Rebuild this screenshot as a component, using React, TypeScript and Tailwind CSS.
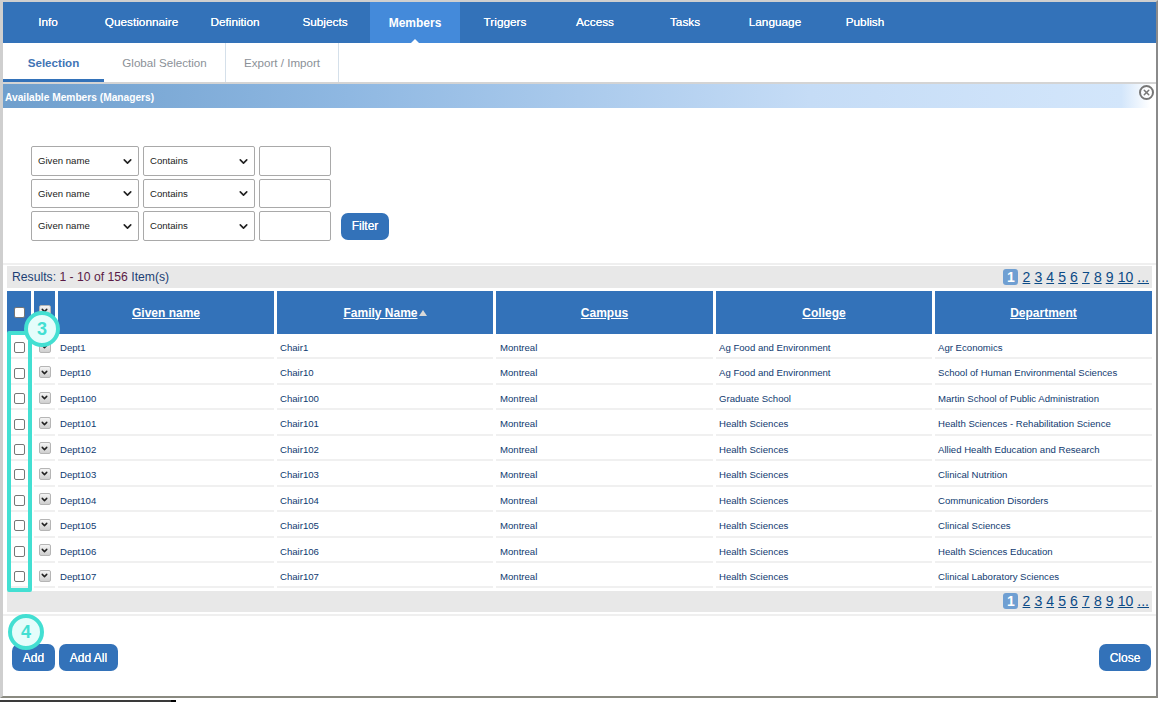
import { ChevronDown, X } from "lucide-react";

const tabs = [
  { label: "Info", w: "w-[90px]" },
  { label: "Questionnaire", w: "w-[97px]" },
  { label: "Definition", w: "w-[90px]" },
  { label: "Subjects", w: "w-[90px]" },
  { label: "Members", w: "w-[90px]", active: true },
  { label: "Triggers", w: "w-[90px]" },
  { label: "Access", w: "w-[90px]" },
  { label: "Tasks", w: "w-[90px]" },
  { label: "Language", w: "w-[90px]" },
  { label: "Publish", w: "w-[90px]" },
];

const rows = [
  ["Dept1", "Chair1", "Ag Food and Environment", "Agr Economics"],
  ["Dept10", "Chair10", "Ag Food and Environment", "School of Human Environmental Sciences"],
  ["Dept100", "Chair100", "Graduate School", "Martin School of Public Administration"],
  ["Dept101", "Chair101", "Health Sciences", "Health Sciences - Rehabilitation Science"],
  ["Dept102", "Chair102", "Health Sciences", "Allied Health Education and Research"],
  ["Dept103", "Chair103", "Health Sciences", "Clinical Nutrition"],
  ["Dept104", "Chair104", "Health Sciences", "Communication Disorders"],
  ["Dept105", "Chair105", "Health Sciences", "Clinical Sciences"],
  ["Dept106", "Chair106", "Health Sciences", "Health Sciences Education"],
  ["Dept107", "Chair107", "Health Sciences", "Clinical Laboratory Sciences"],
];

const gridCols =
  "grid grid-cols-[24px_21px_216px_216px_217px_216px_217px] gap-x-[3px]";

function Pager() {
  return (
    <div className="flex items-center gap-[4.1px] text-[14px] leading-[16px] text-[#0b4a86]">
      <span className="flex h-[16px] w-[15px] items-center justify-center rounded-[3px] bg-[#6f9fd2] font-bold text-white">
        1
      </span>
      {["2", "3", "4", "5", "6", "7", "8", "9", "10", "..."].map((n) => (
        <span key={n} className="underline">
          {n}
        </span>
      ))}
    </div>
  );
}

function BlueButton({ label, className }: { label: string; className: string }) {
  return (
    <button
      className={`flex items-center justify-center rounded-[7px] bg-[#3372b9] text-[12px] text-white [text-shadow:0_0_0.6px_#fff] ${className}`}
    >
      {label}
    </button>
  );
}

function Dropdown({ label, className }: { label: string; className: string }) {
  return (
    <div
      className={`flex items-center justify-between rounded-[2px] border border-[#a9a9a9] bg-white pl-[6px] pr-[4px] text-[9.6px] text-[#222] ${className}`}
    >
      <span className="pt-[1px]">{label}</span>
      <ChevronDown size={13} strokeWidth={3} className="text-[#222]" />
    </div>
  );
}

function FilterRow({ h, children }: { h: string; children?: React.ReactNode }) {
  return (
    <div className={`flex items-center gap-[4px] ${h}`}>
      <Dropdown label="Given name" className="h-full w-[108px]" />
      <Dropdown label="Contains" className="h-full w-[112px]" />
      <div className="h-full w-[72px] rounded-[2px] border border-[#a9a9a9] bg-white" />
      {children}
    </div>
  );
}

function RowToggle() {
  return (
    <span className="flex h-[12px] w-[12px] items-center justify-center rounded-[2px] border border-[#b5b5b5] bg-gradient-to-b from-[#f4f4f4] to-[#cfcfcf]">
      <ChevronDown size={9} strokeWidth={4} className="text-[#222]" />
    </span>
  );
}

function CheckBox() {
  return (
    <span className="block h-[11px] w-[11px] rounded-[2px] border border-[#767676] bg-white" />
  );
}

function App() {
  return (
    <div className="relative h-[702px] w-[1160px] overflow-hidden bg-white font-['Liberation_Sans',Arial,sans-serif]">
      <div className="flex h-[698px] w-[1158px] flex-col border-b-2 border-l-[3px] border-r-2 border-t-2 border-b-[#8a8a80] border-l-[#cfcfcf] border-r-[#8a8a8a] border-t-[#cfcfcf]">
        <nav className="flex h-[41px] shrink-0 bg-[#3372b9]">
          {tabs.map((t) => (
            <div
              key={t.label}
              className={`relative flex items-center justify-center pt-[1px] text-white ${t.w} ${
                t.active
                  ? "bg-[#448ada] text-[12px] font-bold"
                  : "text-[11.8px] [text-shadow:0_0_0.6px_#fff]"
              }`}
            >
              {t.label}
              {t.active && (
                <span className="absolute bottom-0 left-1/2 h-0 w-0 -translate-x-1/2 border-x-[4px] border-b-[4px] border-x-transparent border-b-white" />
              )}
            </div>
          ))}
        </nav>

        <div className="flex h-[39px] shrink-0 text-[11.6px]">
          <div className="flex w-[101px] items-center justify-center border-b-[3px] border-[#3372b9] pt-[3px] font-bold text-[#3f74b5]">
            Selection
          </div>
          <div className="flex w-[122px] items-center justify-center border-r border-[#d5e0ea] text-[#8b9198]">
            Global Selection
          </div>
          <div className="flex w-[113px] items-center justify-center border-r border-[#d5e0ea] text-[#8b9198]">
            Export / Import
          </div>
        </div>

        <div className="h-[2px] shrink-0 bg-[#d4d4d4]" />

        <div className="relative h-[24px] shrink-0 bg-[linear-gradient(90deg,#6f9fcd_0%,#8fb8e2_30%,#c5dcf6_70%,#d3e6fb_97%,#ffffff_99.5%)] pl-[2px] pt-[2px] text-[10.2px] font-bold leading-[24px] text-white">
          Available Members (Managers)
        </div>

        <div className="flex shrink-0 flex-col pl-[28px] pt-[38px]">
          <div className="flex flex-col gap-[3px]">
            <FilterRow h="h-[30px]" />
            <FilterRow h="h-[29px]" />
            <FilterRow h="h-[30px]">
              <BlueButton label="Filter" className="ml-[6px] h-[27px] w-[48px]" />
            </FilterRow>
          </div>
        </div>

        <div className="mt-[22px] h-[2px] shrink-0 bg-[#efefef]" />

        <div className="mx-[4px] mt-[1px] flex h-[22px] shrink-0 items-center justify-between bg-[#e8e8e8] pl-[5px] pr-[3px]">
          <span className="text-[12.2px] text-[#1c3f74]">
            Results: <span className="text-[#5a1a45]">1 - 10 of 156</span> Item(s)
          </span>
          <Pager />
        </div>

        <div className={`${gridCols} mx-[4px] mt-[3px] shrink-0`}>
          <div className="flex h-[43px] items-center justify-center bg-[#3372b9]">
            <CheckBox />
          </div>
          <div className="flex h-[43px] items-center justify-center bg-[#3372b9] pb-[4px]">
            <RowToggle />
          </div>
          {["Given name", "Family Name", "Campus", "College", "Department"].map((h) => (
            <div
              key={h}
              className="flex h-[43px] items-center justify-center bg-[#3372b9] text-[12px] font-bold text-white"
            >
              <span className="underline">{h}</span>
              {h === "Family Name" && (
                <span className="ml-[1px] h-0 w-0 border-x-[4px] border-b-[6px] border-x-transparent border-b-[#d8d8d8]" />
              )}
            </div>
          ))}
        </div>

        <div className="mx-[4px] shrink-0">
          {rows.map((r) => (
            <div key={r[0]} className={`${gridCols} h-[25.45px] text-[9.6px] text-[#0f3a70]`}>
              <div className="flex items-center justify-center border-b-2 border-[#f0f0f0] pt-[4px]">
                <CheckBox />
              </div>
              <div className="flex items-center justify-center border-b-2 border-[#f0f0f0] pt-[2px]">
                <RowToggle />
              </div>
              <div className="flex items-center border-b-2 border-[#f0f0f0] pl-[2px] pt-[5px]">{r[0]}</div>
              <div className="flex items-center border-b-2 border-[#f0f0f0] pl-[3px] pt-[5px]">{r[1]}</div>
              <div className="flex items-center border-b-2 border-[#f0f0f0] pl-[4px] pt-[5px]">Montreal</div>
              <div className="flex items-center border-b-2 border-[#f0f0f0] pl-[3px] pt-[5px]">{r[2]}</div>
              <div className="flex items-center border-b-2 border-[#f0f0f0] pl-[3px] pt-[5px]">{r[3]}</div>
            </div>
          ))}
        </div>

        <div className="mx-[4px] mt-[2.5px] flex h-[21px] shrink-0 items-center justify-end bg-[#e8e8e8] pr-[3px]">
          <Pager />
        </div>
        <div className="mt-[2px] h-[2px] shrink-0 bg-[#efefef]" />

        <div className="mt-[28.5px] flex shrink-0 items-center pl-[9px] pr-[5px]">
          <BlueButton label="Add" className="h-[27px] w-[43px]" />
          <BlueButton label="Add All" className="ml-[4px] h-[27px] w-[59px]" />
          <BlueButton label="Close" className="ml-auto h-[27px] w-[52px]" />
        </div>
      </div>

      <div className="absolute bottom-0 left-0 h-[2px] w-[176px] bg-[linear-gradient(90deg,#3a3a3a_97%,#000000_97%)]" />

      {/* close icon on the panel header */}
      <span className="absolute left-[1139px] top-[85px] flex h-[15px] w-[15px] items-center justify-center rounded-full border-2 border-[#777] bg-white/60">
        <X size={9} strokeWidth={4} className="text-[#777]" />
      </span>

      {/* tutorial annotations */}
      <div className="absolute left-[7px] top-[331px] h-[261px] w-[25px] rounded-[2px] border-[4px] border-[#43dfd2]" />
      <div className="absolute left-[24px] top-[311px] flex h-[36px] w-[36px] items-center justify-center rounded-full border-[4px] border-[#43dfd2] bg-[#e5fdfb] text-[18px] font-bold text-[#43dfd2]">
        3
      </div>
      <div className="absolute left-[8px] top-[614px] flex h-[36px] w-[36px] items-center justify-center rounded-full border-[4px] border-[#43dfd2] bg-[#e5fdfb] text-[18px] font-bold text-[#43dfd2]">
        4
      </div>
    </div>
  );
}

export default App;
